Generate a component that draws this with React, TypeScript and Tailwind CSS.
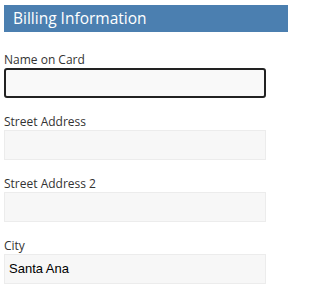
export default function App() {
  const fields = [
    { label: "Street Address", value: "" },
    { label: "Street Address 2", value: "" },
    { label: "City", value: "Santa Ana" },
  ];

  return (
    <div className="h-[288px] w-[288px] overflow-hidden bg-white font-['Open_Sans',sans-serif]">
      {/* Titre */}
      <div className="ml-1 mt-[5px] flex h-[27px] items-center bg-[#4b7fb0] pl-[9px] text-[15.5px] text-white">
        Billing Information
      </div>

      <div className="mt-[20px] pl-1">
        <label className="block text-[12px] leading-[16px] text-[#333]">Name on Card</label>
        <div className="h-[30px] w-[262px] rounded-[3px] border-2 border-[#222] bg-[#f9f9f9]" />

        {fields.map((f) => (
          <div key={f.label} className="mt-[16px]">
            <label className="block text-[12px] leading-[16px] text-[#333]">{f.label}</label>
            <div className="flex h-[30px] w-[262px] items-center border border-[#ececec] bg-[#f7f7f7] px-[4px] font-['Liberation_Sans',sans-serif] text-[13px] text-black">
              {f.value}
            </div>
          </div>
        ))}
      </div>
    </div>
  );
}
